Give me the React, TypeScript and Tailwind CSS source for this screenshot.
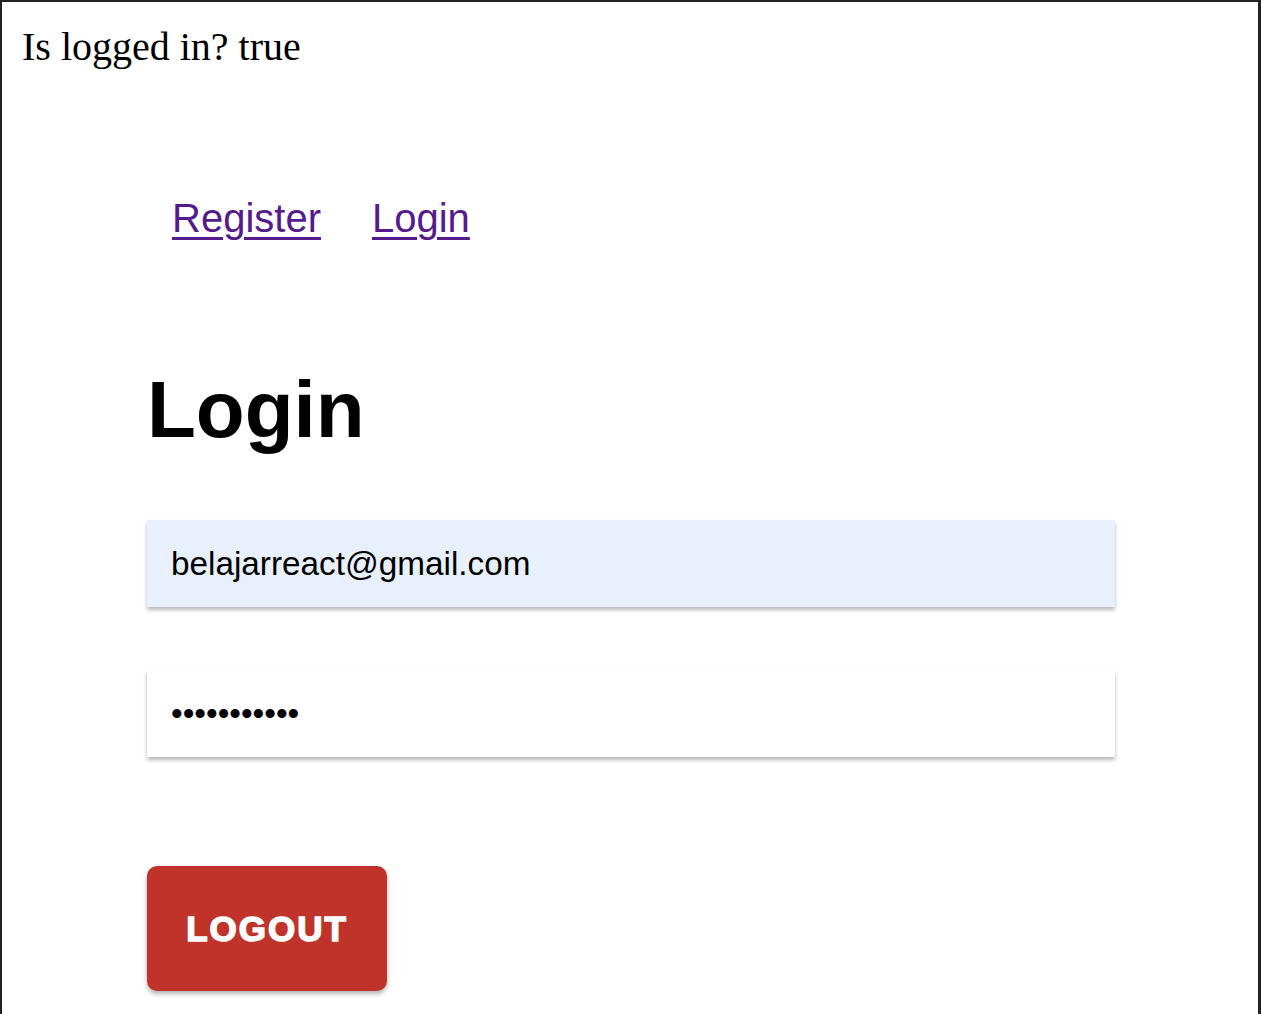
import React from 'react';

export default function App() {
  return (
    <div className="min-h-[1014px] w-full border-t-[2px] border-l-[2px] border-r-[3px] border-[#232323] bg-white">
      {/* Status line */}
      <div className="pt-[22px] pl-[20px]">
        <p className="text-[40px] leading-[46px] text-black font-['Liberation_Serif',serif]">
          Is logged in? true
        </p>
      </div>

      <div className="pl-[145px] font-['Liberation_Sans',Arial,sans-serif]">
        {/* Nav links */}
        <nav className="mt-[125px] flex items-center gap-[51px] pl-[25px]">
          <a href="#" className="text-[40px] leading-[46px] text-[#551a8b] underline decoration-[3px] underline-offset-[5px]">
            Register
          </a>
          <a href="#" className="text-[40px] leading-[46px] text-[#551a8b] underline decoration-[3px] underline-offset-[5px]">
            Login
          </a>
        </nav>

        {/* Form */}
        <h1 className="mt-[123px] text-[80px] leading-[92px] font-bold text-black">Login</h1>

        <div className="mt-[64px] w-[968px] flex flex-col gap-[63px]">
          <input
            type="email"
            readOnly
            value="belajarreact@gmail.com"
            className="h-[87px] w-full bg-[#e8f0fe] px-[24px] text-[33.3px] text-black outline-none shadow-[0_3px_4px_rgba(0,0,0,0.28)]"
          />
          <input
            type="password"
            readOnly
            value="12345678901"
            className="h-[87px] w-full bg-white px-[24px] text-[33.3px] text-black outline-none shadow-[0_3px_4px_rgba(0,0,0,0.28)]"
          />
        </div>

        <button className="mt-[109px] h-[125px] w-[240px] rounded-[10px] bg-[#c0332a] pt-[2px] text-[35px] font-black tracking-[2px] text-white [-webkit-text-stroke:1.5px_white] shadow-[0_3px_5px_rgba(0,0,0,0.3)]">
          LOGOUT
        </button>
      </div>
    </div>
  );
}
